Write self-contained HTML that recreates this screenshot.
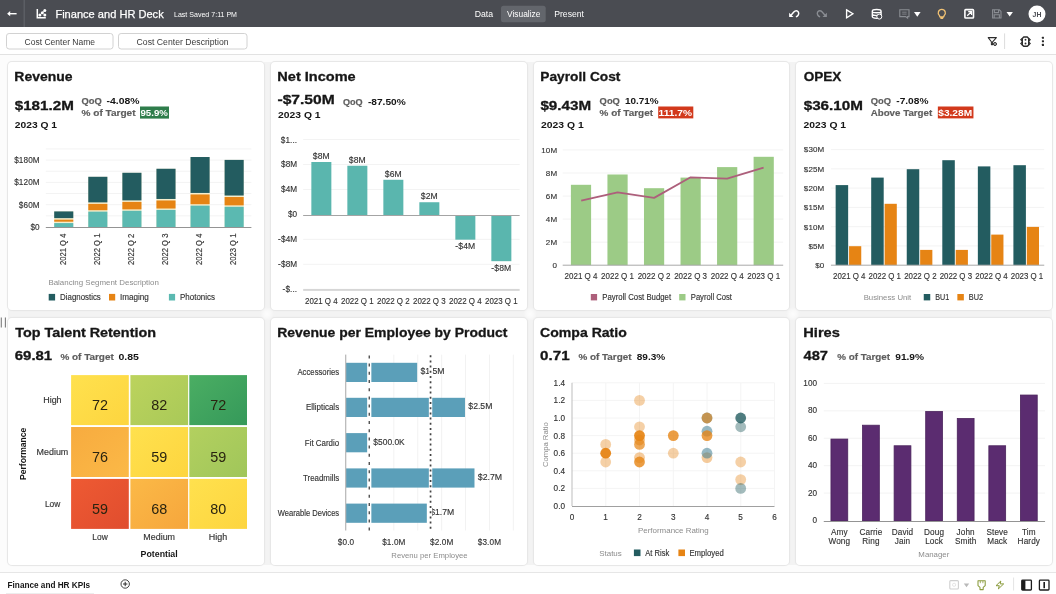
<!DOCTYPE html><html lang="en"><head><meta charset="utf-8"><title>Finance and HR Deck</title><style>

*{margin:0;padding:0;box-sizing:border-box}
html,body{width:1056px;height:594px;overflow:hidden;background:#fcfcfc;font-family:"Liberation Sans", sans-serif;}
svg{display:block;font-family:"Liberation Sans", sans-serif;will-change:transform;}
text{font-family:"Liberation Sans", sans-serif;}
.top{position:absolute;left:0;top:0;width:1056px;height:27px;background:#4a4c52;}
.fbar{position:absolute;left:0;top:27px;width:1056px;height:28px;background:#fff;border-bottom:1px solid #e2e2e2;}
.canvas{position:absolute;left:0;top:55px;width:1056px;height:517px;background:#fcfcfc;}
.card{position:absolute;background:#fff;border-radius:4px;overflow:hidden;box-shadow:0 0 0 1px #e7e7e7,0 0 3px rgba(0,0,0,.06);}
.gut{position:absolute;background:#f3f3f3}
.spot{position:absolute;width:14px;height:14px;background:radial-gradient(circle,rgba(255,255,255,.85) 0,rgba(255,255,255,.5) 35%,rgba(255,255,255,0) 70%)}
.foot{position:absolute;left:0;top:572px;width:1056px;height:22px;background:#fff;border-top:1px solid #e6e6e6;}
.foot svg{margin-top:-1px}
.grip{position:absolute;left:0;top:317px;width:8px;height:11px}

</style></head><body>
<header class="top"><svg width="1056" height="27" viewBox="0 0 1056 27"><line x1="24.20" y1="0.00" x2="24.20" y2="27.00" stroke="#5f6268" stroke-width="1.3" /><path d="M16.6 13.7H8.6" fill="none" stroke="#ffffff" stroke-width="1.4"/><path d="M7.1 13.7L10.2 11.1V16.3Z" fill="#ffffff"/><path d="M37.3 9.1V17.8H45.8" fill="none" stroke="#ffffff" stroke-width="1.5"/><path d="M39.9 15L44.8 10.5" fill="none" stroke="#ffffff" stroke-width=".7"/><circle cx="39.9" cy="15" r="1.5" fill="#ffffff"/><circle cx="42.35" cy="12.8" r="1.5" fill="#ffffff"/><circle cx="44.8" cy="10.5" r="1.5" fill="#ffffff"/><circle cx="44.8" cy="15" r="1.5" fill="#ffffff"/><text x="55.4" y="17.9" font-size="11.8" fill="#ffffff" textLength="108.3" lengthAdjust="spacingAndGlyphs" stroke="#fff" stroke-width=".25">Finance and HR Deck</text><text x="174.0" y="17.2" font-size="7.2" fill="#ffffff" textLength="63.0" lengthAdjust="spacingAndGlyphs">Last Saved 7:11 PM</text><text x="474.7" y="17.3" font-size="8.8" fill="#ffffff" textLength="18.4" lengthAdjust="spacingAndGlyphs">Data</text><rect x="501" y="5.7" width="44.7" height="16.5" rx="2.5" fill="#63666c"/><text x="507.0" y="17.3" font-size="8.8" fill="#ffffff" textLength="33.4" lengthAdjust="spacingAndGlyphs">Visualize</text><text x="554.2" y="17.3" font-size="8.8" fill="#ffffff" textLength="29.8" lengthAdjust="spacingAndGlyphs">Present</text><path d="M791 15.2L793.8 12C795.3 10.3 797.5 10.3 798.4 12.1C799.3 13.9 798.2 16.1 795.9 16.9" fill="none" stroke="#ffffff" stroke-width="1.45"/><path d="M789.1 12.8V17.1H793.5Z" fill="#ffffff"/><path d="M825 15.2L822.2 12C820.7 10.3 818.5 10.3 817.6 12.1C816.7 13.9 817.8 16.1 820.1 16.9" fill="none" stroke="#8a8d93" stroke-width="1.35"/><path d="M826.9 12.8V17.1H822.5Z" fill="#8a8d93"/><path d="M846.6 9.9L852.9 13.8L846.6 17.7Z" fill="none" stroke="#ffffff" stroke-width="1.35" stroke-linejoin="miter"/><path d="M872.3 11.2C872.3 8.9 881.1 8.9 881.1 11.2V16.6C881.1 17.6 879 18.3 876.7 18.3C874.4 18.3 872.3 17.6 872.3 16.6Z M872.3 11.2C872.3 13.3 881.1 13.3 881.1 11.2 M872.3 14C872.3 16 881.1 16 881.1 14" fill="none" stroke="#ffffff" stroke-width="1.35"/><circle cx="879.3" cy="16.6" r="2.5" fill="#4a4c52" stroke="#ffffff" stroke-width="1"/><path d="M899.8 9.7H909V16.6H907.6V18.2L905.6 16.6H899.8Z" fill="none" stroke="#8a8d93" stroke-width="1.1"/><path d="M902.2 12.2H906.6M902.2 14.1H906.6" stroke="#8a8d93" stroke-width=".8"/><path d="M914 12.1H920.6L917.3 16.7Z" fill="#ffffff"/><path d="M939.4 15.4C937.2 13.6 938.2 9.4 941.8 9.4C945.4 9.4 946.4 13.6 944.2 15.4L943.6 17H940Z M940.4 18.4H943.2" fill="none" stroke="#f1c274" stroke-width="1.3" stroke-linejoin="round"/><rect x="964.9" y="9.6" width="8.6" height="8.4" rx=".8" fill="none" stroke="#ffffff" stroke-width="1.6"/><path d="M967.2 15.8L971.4 11.8M968.2 11.6H971.6V15" fill="none" stroke="#ffffff" stroke-width="1.2"/><path d="M992.6 9.8H999.4L1001 11.4V18H992.6Z M994.4 9.8V12.6H998.6V9.8 M994.2 18V14.8H999.4V18" fill="none" stroke="#8a8d93" stroke-width="1.1"/><path d="M1006.5 12.1H1012.9L1009.7 16.6Z" fill="#ffffff"/><circle cx="1037" cy="13.9" r="8.5" fill="#ffffff"/><text x="1037.0" y="16.6" font-size="7.4" fill="#4a4c52" text-anchor="middle" font-weight="bold" textLength="8.8" lengthAdjust="spacingAndGlyphs">JH</text></svg></header>
<nav class="fbar"><svg width="1056" height="28" viewBox="0 27 1056 28"><rect x="6.5" y="33.5" width="106.5" height="15.5" rx="2.6" fill="#fff" stroke="#d2d2d2"/><text x="59.8" y="44.7" font-size="8.5" fill="#3a3a3a" text-anchor="middle" textLength="70.5" lengthAdjust="spacingAndGlyphs">Cost Center Name</text><rect x="118.5" y="33.5" width="128.5" height="15.5" rx="2.6" fill="#fff" stroke="#d2d2d2"/><text x="182.6" y="44.7" font-size="8.5" fill="#3a3a3a" text-anchor="middle" textLength="92.0" lengthAdjust="spacingAndGlyphs">Cost Center Description</text><path d="M988.2 37.6H996.4L992.6 41.8V44.6L991.4 44.6V41.8Z" fill="none" stroke="#2c2c2c" stroke-width="1.05" stroke-linejoin="round"/><circle cx="995" cy="44" r="1.5" fill="#bdbdbd" stroke="#2c2c2c" stroke-width="1"/><line x1="1004.60" y1="33.40" x2="1004.60" y2="49.00" stroke="#dcdcdc" stroke-width="1" /><path d="M1023.7 37H1027.3L1028.7 38.4V44.9L1027.3 46.3H1023.7L1022.3 44.9V38.4Z" fill="none" stroke="#2c2c2c" stroke-width="1.4" stroke-linejoin="round"/><path d="M1022.2 38.5L1020.8 39.8L1022.2 41.1M1022.2 42.2L1020.8 43.5L1022.2 44.8M1028.8 38.5L1030.2 39.8L1028.8 41.1M1028.8 42.2L1030.2 43.5L1028.8 44.8" fill="none" stroke="#2c2c2c" stroke-width="1.1"/><circle cx="1025.5" cy="39.8" r=".95" fill="#2c2c2c"/><circle cx="1025.5" cy="43.5" r=".95" fill="#2c2c2c"/><rect x="1041.9" y="36.65" width="2.1" height="2.1" rx=".5" fill="#2c2c2c"/><rect x="1041.9" y="40.25" width="2.1" height="2.1" rx=".5" fill="#2c2c2c"/><rect x="1041.9" y="43.85" width="2.1" height="2.1" rx=".5" fill="#2c2c2c"/></svg></nav>
<main class="canvas"></main>
<div class="gut" style="left:263.75px;top:62px;width:7.00px;height:503px"></div><div class="gut" style="left:526.50px;top:62px;width:7.00px;height:503px"></div><div class="gut" style="left:789.25px;top:62px;width:7.00px;height:503px"></div><div class="gut" style="left:8px;top:310px;width:1044px;height:8px"></div><div class="spot" style="left:260.25px;top:307px"></div><div class="spot" style="left:523.00px;top:307px"></div><div class="spot" style="left:785.75px;top:307px"></div>
<section class="card" style="left:8px;top:62px;width:255.75px;height:248px"><svg width="255.75" height="248" viewBox="8 62 255.75 248"><text x="14.3" y="81.4" font-size="13" fill="#161616" font-weight="bold" textLength="58.2" lengthAdjust="spacingAndGlyphs" stroke="#161616" stroke-width=".3">Revenue</text><text x="14.7" y="110.1" font-size="13" fill="#161616" font-weight="bold" textLength="59.2" lengthAdjust="spacingAndGlyphs" stroke="#161616" stroke-width=".3">$181.2M</text><text x="81.5" y="104.0" font-size="9.2" fill="#5e5e5e" font-weight="bold" textLength="20.3" lengthAdjust="spacingAndGlyphs" stroke="#5e5e5e" stroke-width=".18">QoQ</text><text x="106.5" y="104.0" font-size="9.2" fill="#161616" font-weight="bold" textLength="33.0" lengthAdjust="spacingAndGlyphs">-4.08%</text><text x="81.5" y="116.3" font-size="9.2" fill="#5e5e5e" font-weight="bold" textLength="54.0" lengthAdjust="spacingAndGlyphs" stroke="#5e5e5e" stroke-width=".18">% of Target</text><rect x="140.00" y="106.50" width="29.00" height="12.10" fill="#2f7d4b" /><text x="140.5" y="116.3" font-size="9.2" fill="#ffffff" font-weight="bold" textLength="27.4" lengthAdjust="spacingAndGlyphs">95.9%</text><text x="14.8" y="128.2" font-size="9.3" fill="#161616" font-weight="bold" textLength="42.2" lengthAdjust="spacingAndGlyphs">2023 Q 1</text><line x1="45.80" y1="215.85" x2="251.40" y2="215.85" stroke="#f3f3f3" stroke-width="1" /><line x1="45.80" y1="204.70" x2="251.40" y2="204.70" stroke="#f3f3f3" stroke-width="1" /><line x1="45.80" y1="193.55" x2="251.40" y2="193.55" stroke="#f3f3f3" stroke-width="1" /><line x1="45.80" y1="182.40" x2="251.40" y2="182.40" stroke="#f3f3f3" stroke-width="1" /><line x1="45.80" y1="171.25" x2="251.40" y2="171.25" stroke="#f3f3f3" stroke-width="1" /><line x1="45.80" y1="160.10" x2="251.40" y2="160.10" stroke="#f3f3f3" stroke-width="1" /><line x1="45.80" y1="148.95" x2="251.40" y2="148.95" stroke="#f3f3f3" stroke-width="1" /><text x="39.8" y="229.9" font-size="8.2" fill="#333333" text-anchor="end" letter-spacing=".12" stroke="#333333" stroke-width=".14">$0</text><text x="39.8" y="207.6" font-size="8.2" fill="#333333" text-anchor="end" letter-spacing=".12" stroke="#333333" stroke-width=".14">$60M</text><text x="39.8" y="185.3" font-size="8.2" fill="#333333" text-anchor="end" letter-spacing=".12" stroke="#333333" stroke-width=".14">$120M</text><text x="39.8" y="163.0" font-size="8.2" fill="#333333" text-anchor="end" letter-spacing=".12" stroke="#333333" stroke-width=".14">$180M</text><rect x="54.20" y="211.42" width="19.10" height="15.58" fill="#f5eecd" /><rect x="54.20" y="211.42" width="19.10" height="6.73" fill="#235c60" /><rect x="54.20" y="219.65" width="19.10" height="2.04" fill="#e68414" /><rect x="54.20" y="223.08" width="19.10" height="3.92" fill="#5bb9b1" /><text x="65.8" y="233.6" font-size="8.4" fill="#333333" text-anchor="end" textLength="31.5" lengthAdjust="spacingAndGlyphs" stroke="#333333" stroke-width=".14" transform="rotate(-90 65.8 233.6)">2021 Q 4</text><rect x="88.28" y="176.78" width="19.10" height="50.22" fill="#f5eecd" /><rect x="88.28" y="176.78" width="19.10" height="25.62" fill="#235c60" /><rect x="88.28" y="203.90" width="19.10" height="6.33" fill="#e68414" /><rect x="88.28" y="211.63" width="19.10" height="15.37" fill="#5bb9b1" /><text x="99.8" y="233.6" font-size="8.4" fill="#333333" text-anchor="end" textLength="31.5" lengthAdjust="spacingAndGlyphs" stroke="#333333" stroke-width=".14" transform="rotate(-90 99.8 233.6)">2022 Q 1</text><rect x="122.36" y="172.77" width="19.10" height="54.23" fill="#f5eecd" /><rect x="122.36" y="172.77" width="19.10" height="27.63" fill="#235c60" /><rect x="122.36" y="201.90" width="19.10" height="7.47" fill="#e68414" /><rect x="122.36" y="210.77" width="19.10" height="16.23" fill="#5bb9b1" /><text x="133.9" y="233.6" font-size="8.4" fill="#333333" text-anchor="end" textLength="31.5" lengthAdjust="spacingAndGlyphs" stroke="#333333" stroke-width=".14" transform="rotate(-90 133.9 233.6)">2022 Q 2</text><rect x="156.44" y="168.76" width="19.10" height="58.24" fill="#f5eecd" /><rect x="156.44" y="168.76" width="19.10" height="30.21" fill="#235c60" /><rect x="156.44" y="200.47" width="19.10" height="8.05" fill="#e68414" /><rect x="156.44" y="209.91" width="19.10" height="17.09" fill="#5bb9b1" /><text x="168.0" y="233.6" font-size="8.4" fill="#333333" text-anchor="end" textLength="31.5" lengthAdjust="spacingAndGlyphs" stroke="#333333" stroke-width=".14" transform="rotate(-90 168.0 233.6)">2022 Q 3</text><rect x="190.52" y="157.02" width="19.10" height="69.98" fill="#f5eecd" /><rect x="190.52" y="157.02" width="19.10" height="35.93" fill="#235c60" /><rect x="190.52" y="194.46" width="19.10" height="9.77" fill="#e68414" /><rect x="190.52" y="205.62" width="19.10" height="21.38" fill="#5bb9b1" /><text x="202.1" y="233.6" font-size="8.4" fill="#333333" text-anchor="end" textLength="31.5" lengthAdjust="spacingAndGlyphs" stroke="#333333" stroke-width=".14" transform="rotate(-90 202.1 233.6)">2022 Q 4</text><rect x="224.60" y="159.89" width="19.10" height="67.11" fill="#f5eecd" /><rect x="224.60" y="159.89" width="19.10" height="35.64" fill="#235c60" /><rect x="224.60" y="197.03" width="19.10" height="8.33" fill="#e68414" /><rect x="224.60" y="206.77" width="19.10" height="20.23" fill="#5bb9b1" /><text x="236.1" y="233.6" font-size="8.4" fill="#333333" text-anchor="end" textLength="31.5" lengthAdjust="spacingAndGlyphs" stroke="#333333" stroke-width=".14" transform="rotate(-90 236.1 233.6)">2023 Q 1</text><line x1="45.80" y1="227.50" x2="251.40" y2="227.50" stroke="#949494" stroke-width="1" /><text x="48.4" y="284.6" font-size="8" fill="#8c8c8c" textLength="110.5" lengthAdjust="spacingAndGlyphs">Balancing Segment Description</text><rect x="48.70" y="293.90" width="6.40" height="6.60" fill="#235c60" /><text x="60.1" y="300.1" font-size="8.2" fill="#333333" textLength="40.7" lengthAdjust="spacingAndGlyphs" stroke="#333333" stroke-width=".14">Diagnostics</text><rect x="109.00" y="293.90" width="6.20" height="6.60" fill="#e68414" /><text x="120.0" y="300.1" font-size="8.2" fill="#333333" textLength="28.9" lengthAdjust="spacingAndGlyphs" stroke="#333333" stroke-width=".14">Imaging</text><rect x="168.90" y="293.90" width="6.20" height="6.60" fill="#5bb9b1" /><text x="180.0" y="300.1" font-size="8.2" fill="#333333" textLength="35.0" lengthAdjust="spacingAndGlyphs" stroke="#333333" stroke-width=".14">Photonics</text></svg></section>
<section class="card" style="left:270.75px;top:62px;width:255.75px;height:248px"><svg width="255.75" height="248" viewBox="270.75 62 255.75 248"><text x="277.1" y="81.4" font-size="13" fill="#161616" font-weight="bold" textLength="78.3" lengthAdjust="spacingAndGlyphs" stroke="#161616" stroke-width=".3">Net Income</text><text x="277.2" y="104.4" font-size="13" fill="#161616" font-weight="bold" textLength="57.2" lengthAdjust="spacingAndGlyphs" stroke="#161616" stroke-width=".3">-$7.50M</text><text x="342.7" y="104.8" font-size="9.2" fill="#5e5e5e" font-weight="bold" textLength="19.7" lengthAdjust="spacingAndGlyphs" stroke="#5e5e5e" stroke-width=".18">QoQ</text><text x="367.7" y="104.8" font-size="9.2" fill="#161616" font-weight="bold" textLength="37.8" lengthAdjust="spacingAndGlyphs">-87.50%</text><text x="277.8" y="117.9" font-size="9.3" fill="#161616" font-weight="bold" textLength="42.5" lengthAdjust="spacingAndGlyphs">2023 Q 1</text><line x1="302.90" y1="289.25" x2="519.40" y2="289.25" stroke="#f3f3f3" stroke-width="1" /><line x1="302.90" y1="264.30" x2="519.40" y2="264.30" stroke="#f3f3f3" stroke-width="1" /><line x1="302.90" y1="239.35" x2="519.40" y2="239.35" stroke="#f3f3f3" stroke-width="1" /><line x1="302.90" y1="189.45" x2="519.40" y2="189.45" stroke="#f3f3f3" stroke-width="1" /><line x1="302.90" y1="164.50" x2="519.40" y2="164.50" stroke="#f3f3f3" stroke-width="1" /><line x1="302.90" y1="139.55" x2="519.40" y2="139.55" stroke="#f3f3f3" stroke-width="1" /><text x="297.0" y="142.5" font-size="8.2" fill="#333333" text-anchor="end" letter-spacing=".12" stroke="#333333" stroke-width=".14">$1...</text><text x="297.0" y="167.4" font-size="8.2" fill="#333333" text-anchor="end" letter-spacing=".12" stroke="#333333" stroke-width=".14">$8M</text><text x="297.0" y="192.4" font-size="8.2" fill="#333333" text-anchor="end" letter-spacing=".12" stroke="#333333" stroke-width=".14">$4M</text><text x="297.0" y="217.3" font-size="8.2" fill="#333333" text-anchor="end" letter-spacing=".12" stroke="#333333" stroke-width=".14">$0</text><text x="297.0" y="242.3" font-size="8.2" fill="#333333" text-anchor="end" letter-spacing=".12" stroke="#333333" stroke-width=".14">-$4M</text><text x="297.0" y="267.2" font-size="8.2" fill="#333333" text-anchor="end" letter-spacing=".12" stroke="#333333" stroke-width=".14">-$8M</text><text x="297.0" y="292.2" font-size="8.2" fill="#333333" text-anchor="end" letter-spacing=".12" stroke="#333333" stroke-width=".14">-$...</text><rect x="311.10" y="162.00" width="20.00" height="53.09" fill="#5ab6ae" /><text x="321.1" y="158.8" font-size="8.6" fill="#333333" text-anchor="middle" letter-spacing=".12" stroke="#333333" stroke-width=".14">$8M</text><text x="321.1" y="303.6" font-size="8.3" fill="#333333" text-anchor="middle" textLength="32.6" lengthAdjust="spacingAndGlyphs" stroke="#333333" stroke-width=".14">2021 Q 4</text><rect x="347.10" y="165.75" width="20.00" height="49.35" fill="#5ab6ae" /><text x="357.1" y="162.5" font-size="8.6" fill="#333333" text-anchor="middle" letter-spacing=".12" stroke="#333333" stroke-width=".14">$8M</text><text x="357.1" y="303.6" font-size="8.3" fill="#333333" text-anchor="middle" textLength="32.6" lengthAdjust="spacingAndGlyphs" stroke="#333333" stroke-width=".14">2022 Q 1</text><rect x="383.10" y="179.78" width="20.00" height="35.32" fill="#5ab6ae" /><text x="393.1" y="176.5" font-size="8.6" fill="#333333" text-anchor="middle" letter-spacing=".12" stroke="#333333" stroke-width=".14">$6M</text><text x="393.1" y="303.6" font-size="8.3" fill="#333333" text-anchor="middle" textLength="32.6" lengthAdjust="spacingAndGlyphs" stroke="#333333" stroke-width=".14">2022 Q 2</text><rect x="419.10" y="202.24" width="20.00" height="12.86" fill="#5ab6ae" /><text x="429.1" y="199.0" font-size="8.6" fill="#333333" text-anchor="middle" letter-spacing=".12" stroke="#333333" stroke-width=".14">$2M</text><text x="429.1" y="303.6" font-size="8.3" fill="#333333" text-anchor="middle" textLength="32.6" lengthAdjust="spacingAndGlyphs" stroke="#333333" stroke-width=".14">2022 Q 3</text><rect x="455.10" y="215.10" width="20.00" height="24.56" fill="#5ab6ae" /><text x="465.1" y="249.1" font-size="8.6" fill="#333333" text-anchor="middle" letter-spacing=".12" stroke="#333333" stroke-width=".14">-$4M</text><text x="465.1" y="303.6" font-size="8.3" fill="#333333" text-anchor="middle" textLength="32.6" lengthAdjust="spacingAndGlyphs" stroke="#333333" stroke-width=".14">2022 Q 4</text><rect x="491.10" y="215.10" width="20.00" height="46.08" fill="#5ab6ae" /><text x="501.1" y="270.6" font-size="8.6" fill="#333333" text-anchor="middle" letter-spacing=".12" stroke="#333333" stroke-width=".14">-$8M</text><text x="501.1" y="303.6" font-size="8.3" fill="#333333" text-anchor="middle" textLength="32.6" lengthAdjust="spacingAndGlyphs" stroke="#333333" stroke-width=".14">2023 Q 1</text><line x1="302.90" y1="215.50" x2="519.40" y2="215.50" stroke="#a4a4a4" stroke-width="1" /><line x1="302.90" y1="290.00" x2="519.40" y2="290.00" stroke="#b8b8b8" stroke-width="1.2" /></svg></section>
<section class="card" style="left:533.5px;top:62px;width:255.75px;height:248px"><svg width="255.75" height="248" viewBox="533.5 62 255.75 248"><text x="539.8" y="81.4" font-size="13" fill="#161616" font-weight="bold" textLength="80.1" lengthAdjust="spacingAndGlyphs" stroke="#161616" stroke-width=".3">Payroll Cost</text><text x="539.9" y="110.1" font-size="13" fill="#161616" font-weight="bold" textLength="50.7" lengthAdjust="spacingAndGlyphs" stroke="#161616" stroke-width=".3">$9.43M</text><text x="599.1" y="104.0" font-size="9.2" fill="#5e5e5e" font-weight="bold" textLength="20.3" lengthAdjust="spacingAndGlyphs" stroke="#5e5e5e" stroke-width=".18">QoQ</text><text x="624.5" y="104.0" font-size="9.2" fill="#161616" font-weight="bold" textLength="33.7" lengthAdjust="spacingAndGlyphs">10.71%</text><text x="599.1" y="116.3" font-size="9.2" fill="#5e5e5e" font-weight="bold" textLength="53.4" lengthAdjust="spacingAndGlyphs" stroke="#5e5e5e" stroke-width=".18">% of Target</text><rect x="657.70" y="106.50" width="35.10" height="11.90" fill="#d2391c" /><text x="658.1" y="116.3" font-size="9.2" fill="#ffffff" font-weight="bold" textLength="33.4" lengthAdjust="spacingAndGlyphs">111.7%</text><text x="540.6" y="128.2" font-size="9.3" fill="#161616" font-weight="bold" textLength="42.6" lengthAdjust="spacingAndGlyphs">2023 Q 1</text><line x1="562.20" y1="242.15" x2="782.70" y2="242.15" stroke="#f3f3f3" stroke-width="1" /><line x1="562.20" y1="219.10" x2="782.70" y2="219.10" stroke="#f3f3f3" stroke-width="1" /><line x1="562.20" y1="196.05" x2="782.70" y2="196.05" stroke="#f3f3f3" stroke-width="1" /><line x1="562.20" y1="173.00" x2="782.70" y2="173.00" stroke="#f3f3f3" stroke-width="1" /><line x1="562.20" y1="149.95" x2="782.70" y2="149.95" stroke="#f3f3f3" stroke-width="1" /><text x="556.7" y="268.0" font-size="8.0" fill="#333333" text-anchor="end" letter-spacing=".12" stroke="#333333" stroke-width=".14">0</text><text x="556.7" y="245.0" font-size="8.0" fill="#333333" text-anchor="end" letter-spacing=".12" stroke="#333333" stroke-width=".14">2M</text><text x="556.7" y="221.9" font-size="8.0" fill="#333333" text-anchor="end" letter-spacing=".12" stroke="#333333" stroke-width=".14">4M</text><text x="556.7" y="198.9" font-size="8.0" fill="#333333" text-anchor="end" letter-spacing=".12" stroke="#333333" stroke-width=".14">6M</text><text x="556.7" y="175.8" font-size="8.0" fill="#333333" text-anchor="end" letter-spacing=".12" stroke="#333333" stroke-width=".14">8M</text><text x="556.7" y="152.8" font-size="8.0" fill="#333333" text-anchor="end" letter-spacing=".12" stroke="#333333" stroke-width=".14">10M</text><rect x="570.40" y="184.80" width="20.20" height="80.40" fill="#9ccb86" /><text x="580.5" y="278.6" font-size="8.3" fill="#333333" text-anchor="middle" textLength="32.8" lengthAdjust="spacingAndGlyphs" stroke="#333333" stroke-width=".14">2021 Q 4</text><rect x="606.94" y="174.50" width="20.20" height="90.70" fill="#9ccb86" /><text x="617.0" y="278.6" font-size="8.3" fill="#333333" text-anchor="middle" textLength="32.8" lengthAdjust="spacingAndGlyphs" stroke="#333333" stroke-width=".14">2022 Q 1</text><rect x="643.48" y="188.20" width="20.20" height="77.00" fill="#9ccb86" /><text x="653.6" y="278.6" font-size="8.3" fill="#333333" text-anchor="middle" textLength="32.8" lengthAdjust="spacingAndGlyphs" stroke="#333333" stroke-width=".14">2022 Q 2</text><rect x="680.02" y="177.60" width="20.20" height="87.60" fill="#9ccb86" /><text x="690.1" y="278.6" font-size="8.3" fill="#333333" text-anchor="middle" textLength="32.8" lengthAdjust="spacingAndGlyphs" stroke="#333333" stroke-width=".14">2022 Q 3</text><rect x="716.56" y="167.10" width="20.20" height="98.10" fill="#9ccb86" /><text x="726.7" y="278.6" font-size="8.3" fill="#333333" text-anchor="middle" textLength="32.8" lengthAdjust="spacingAndGlyphs" stroke="#333333" stroke-width=".14">2022 Q 4</text><rect x="753.10" y="156.80" width="20.20" height="108.40" fill="#9ccb86" /><text x="763.2" y="278.6" font-size="8.3" fill="#333333" text-anchor="middle" textLength="32.8" lengthAdjust="spacingAndGlyphs" stroke="#333333" stroke-width=".14">2023 Q 1</text><line x1="562.20" y1="265.20" x2="782.70" y2="265.20" stroke="#a8a8a8" stroke-width="1" /><polyline fill="none" stroke="#ad5f7b" stroke-width="1.8" stroke-linejoin="round" points="580.7,200.7 617.1,192.3 653.6,197.9 690.1,177.3 726.6,178.6 763.1,167.7"/><rect x="590.30" y="294.00" width="6.30" height="6.40" fill="#ad5f7b" /><text x="601.8" y="300.1" font-size="8.2" fill="#333333" textLength="68.8" lengthAdjust="spacingAndGlyphs" stroke="#333333" stroke-width=".14">Payroll Cost Budget</text><rect x="678.70" y="294.00" width="6.30" height="6.40" fill="#9ccb86" /><text x="690.3" y="300.1" font-size="8.2" fill="#333333" textLength="41.1" lengthAdjust="spacingAndGlyphs" stroke="#333333" stroke-width=".14">Payroll Cost</text></svg></section>
<section class="card" style="left:796.25px;top:62px;width:255.75px;height:248px"><svg width="255.75" height="248" viewBox="796.25 62 255.75 248"><text x="803.9" y="81.4" font-size="13" fill="#161616" font-weight="bold" textLength="37.7" lengthAdjust="spacingAndGlyphs" stroke="#161616" stroke-width=".3">OPEX</text><text x="803.9" y="110.1" font-size="13" fill="#161616" font-weight="bold" textLength="59.4" lengthAdjust="spacingAndGlyphs" stroke="#161616" stroke-width=".3">$36.10M</text><text x="870.9" y="104.0" font-size="9.2" fill="#5e5e5e" font-weight="bold" textLength="20.3" lengthAdjust="spacingAndGlyphs" stroke="#5e5e5e" stroke-width=".18">QoQ</text><text x="896.5" y="104.0" font-size="9.2" fill="#161616" font-weight="bold" textLength="32.2" lengthAdjust="spacingAndGlyphs">-7.08%</text><text x="870.9" y="116.3" font-size="9.2" fill="#5e5e5e" font-weight="bold" textLength="61.6" lengthAdjust="spacingAndGlyphs" stroke="#5e5e5e" stroke-width=".18">Above Target</text><rect x="938.10" y="106.50" width="35.60" height="11.90" fill="#d2391c" /><text x="938.5" y="116.3" font-size="9.2" fill="#ffffff" font-weight="bold" textLength="33.9" lengthAdjust="spacingAndGlyphs">$3.28M</text><text x="803.8" y="128.2" font-size="9.3" fill="#161616" font-weight="bold" textLength="42.5" lengthAdjust="spacingAndGlyphs">2023 Q 1</text><line x1="831.20" y1="245.93" x2="1044.50" y2="245.93" stroke="#f3f3f3" stroke-width="1" /><line x1="831.20" y1="226.66" x2="1044.50" y2="226.66" stroke="#f3f3f3" stroke-width="1" /><line x1="831.20" y1="207.39" x2="1044.50" y2="207.39" stroke="#f3f3f3" stroke-width="1" /><line x1="831.20" y1="188.12" x2="1044.50" y2="188.12" stroke="#f3f3f3" stroke-width="1" /><line x1="831.20" y1="168.85" x2="1044.50" y2="168.85" stroke="#f3f3f3" stroke-width="1" /><line x1="831.20" y1="149.58" x2="1044.50" y2="149.58" stroke="#f3f3f3" stroke-width="1" /><text x="824.6" y="268.0" font-size="8.0" fill="#333333" text-anchor="end" letter-spacing=".12" stroke="#333333" stroke-width=".14">$0</text><text x="824.6" y="248.8" font-size="8.0" fill="#333333" text-anchor="end" letter-spacing=".12" stroke="#333333" stroke-width=".14">$5M</text><text x="824.6" y="229.5" font-size="8.0" fill="#333333" text-anchor="end" letter-spacing=".12" stroke="#333333" stroke-width=".14">$10M</text><text x="824.6" y="210.2" font-size="8.0" fill="#333333" text-anchor="end" letter-spacing=".12" stroke="#333333" stroke-width=".14">$15M</text><text x="824.6" y="191.0" font-size="8.0" fill="#333333" text-anchor="end" letter-spacing=".12" stroke="#333333" stroke-width=".14">$20M</text><text x="824.6" y="171.7" font-size="8.0" fill="#333333" text-anchor="end" letter-spacing=".12" stroke="#333333" stroke-width=".14">$25M</text><text x="824.6" y="152.4" font-size="8.0" fill="#333333" text-anchor="end" letter-spacing=".12" stroke="#333333" stroke-width=".14">$30M</text><rect x="835.90" y="185.10" width="12.50" height="80.10" fill="#235c60" /><rect x="849.30" y="246.20" width="12.20" height="19.00" fill="#e68414" /><text x="849.5" y="278.6" font-size="8.3" fill="#333333" text-anchor="middle" textLength="32.4" lengthAdjust="spacingAndGlyphs" stroke="#333333" stroke-width=".14">2021 Q 4</text><rect x="871.45" y="177.60" width="12.50" height="87.60" fill="#235c60" /><rect x="884.85" y="203.80" width="12.20" height="61.40" fill="#e68414" /><text x="885.0" y="278.6" font-size="8.3" fill="#333333" text-anchor="middle" textLength="32.4" lengthAdjust="spacingAndGlyphs" stroke="#333333" stroke-width=".14">2022 Q 1</text><rect x="907.00" y="169.20" width="12.50" height="96.00" fill="#235c60" /><rect x="920.40" y="249.90" width="12.20" height="15.30" fill="#e68414" /><text x="920.6" y="278.6" font-size="8.3" fill="#333333" text-anchor="middle" textLength="32.4" lengthAdjust="spacingAndGlyphs" stroke="#333333" stroke-width=".14">2022 Q 2</text><rect x="942.55" y="160.20" width="12.50" height="105.00" fill="#235c60" /><rect x="955.95" y="249.90" width="12.20" height="15.30" fill="#e68414" /><text x="956.1" y="278.6" font-size="8.3" fill="#333333" text-anchor="middle" textLength="32.4" lengthAdjust="spacingAndGlyphs" stroke="#333333" stroke-width=".14">2022 Q 3</text><rect x="978.10" y="166.40" width="12.50" height="98.80" fill="#235c60" /><rect x="991.50" y="234.60" width="12.20" height="30.60" fill="#e68414" /><text x="991.7" y="278.6" font-size="8.3" fill="#333333" text-anchor="middle" textLength="32.4" lengthAdjust="spacingAndGlyphs" stroke="#333333" stroke-width=".14">2022 Q 4</text><rect x="1013.65" y="165.20" width="12.50" height="100.00" fill="#235c60" /><rect x="1027.05" y="226.90" width="12.20" height="38.30" fill="#e68414" /><text x="1027.2" y="278.6" font-size="8.3" fill="#333333" text-anchor="middle" textLength="32.4" lengthAdjust="spacingAndGlyphs" stroke="#333333" stroke-width=".14">2023 Q 1</text><line x1="831.20" y1="265.20" x2="1044.50" y2="265.20" stroke="#a8a8a8" stroke-width="1" /><text x="863.9" y="300.1" font-size="8" fill="#8c8c8c" textLength="47.6" lengthAdjust="spacingAndGlyphs">Business Unit</text><rect x="924.00" y="294.00" width="6.50" height="6.40" fill="#235c60" /><text x="935.5" y="300.1" font-size="8.2" fill="#333333" textLength="14.0" lengthAdjust="spacingAndGlyphs" stroke="#333333" stroke-width=".14">BU1</text><rect x="957.60" y="294.00" width="6.50" height="6.40" fill="#e68414" /><text x="969.1" y="300.1" font-size="8.2" fill="#333333" textLength="14.3" lengthAdjust="spacingAndGlyphs" stroke="#333333" stroke-width=".14">BU2</text></svg></section>
<section class="card" style="left:8px;top:318px;width:255.75px;height:247px"><svg width="255.75" height="247" viewBox="8 318 255.75 247"><defs><linearGradient id="hy" x1="0" y1="0" x2="1" y2="1"><stop offset="0" stop-color="#ffe14e"/><stop offset="1" stop-color="#fdd53f"/></linearGradient><linearGradient id="hyg" x1="0" y1="0" x2="1" y2="1"><stop offset="0" stop-color="#bcd35d"/><stop offset="1" stop-color="#a9c958"/></linearGradient><linearGradient id="hg" x1="0" y1="0" x2="1" y2="1"><stop offset="0" stop-color="#4bae63"/><stop offset="1" stop-color="#35995a"/></linearGradient><linearGradient id="ho" x1="0" y1="0" x2="1" y2="1"><stop offset="0" stop-color="#f7ab3f"/><stop offset="1" stop-color="#fbb947"/></linearGradient><linearGradient id="ho2" x1="0" y1="0" x2="1" y2="1"><stop offset="0" stop-color="#fbb947"/><stop offset="1" stop-color="#f6a63c"/></linearGradient><linearGradient id="hlg" x1="0" y1="0" x2="1" y2="1"><stop offset="0" stop-color="#b3d05f"/><stop offset="1" stop-color="#a0c65a"/></linearGradient><linearGradient id="hr" x1="0" y1="0" x2="1" y2="1"><stop offset="0" stop-color="#ee5a33"/><stop offset="1" stop-color="#e04d2e"/></linearGradient></defs><text x="15.2" y="336.9" font-size="13" fill="#161616" font-weight="bold" textLength="140.8" lengthAdjust="spacingAndGlyphs" stroke="#161616" stroke-width=".3">Top Talent Retention</text><text x="14.8" y="359.8" font-size="13" fill="#161616" font-weight="bold" textLength="37.4" lengthAdjust="spacingAndGlyphs" stroke="#161616" stroke-width=".3">69.81</text><text x="60.4" y="360.2" font-size="9.2" fill="#5e5e5e" font-weight="bold" textLength="53.4" lengthAdjust="spacingAndGlyphs" stroke="#5e5e5e" stroke-width=".18">% of Target</text><text x="118.4" y="360.2" font-size="9.2" fill="#161616" font-weight="bold" textLength="20.5" lengthAdjust="spacingAndGlyphs">0.85</text><rect x="71.10" y="375.10" width="57.70" height="50.00" fill="url(#hy)" /><text x="99.9" y="410.0" font-size="15" fill="#2a2410" text-anchor="middle" textLength="16.0" lengthAdjust="spacingAndGlyphs">72</text><rect x="130.40" y="375.10" width="57.70" height="50.00" fill="url(#hyg)" /><text x="159.2" y="410.0" font-size="15" fill="#2a2410" text-anchor="middle" textLength="16.0" lengthAdjust="spacingAndGlyphs">82</text><rect x="189.30" y="375.10" width="57.70" height="50.00" fill="url(#hg)" /><text x="218.2" y="410.0" font-size="15" fill="#2a2410" text-anchor="middle" textLength="16.0" lengthAdjust="spacingAndGlyphs">72</text><rect x="71.10" y="427.00" width="57.70" height="50.00" fill="url(#ho)" /><text x="99.9" y="461.9" font-size="15" fill="#2a2410" text-anchor="middle" textLength="16.0" lengthAdjust="spacingAndGlyphs">76</text><rect x="130.40" y="427.00" width="57.70" height="50.00" fill="url(#hy)" /><text x="159.2" y="461.9" font-size="15" fill="#2a2410" text-anchor="middle" textLength="16.0" lengthAdjust="spacingAndGlyphs">59</text><rect x="189.30" y="427.00" width="57.70" height="50.00" fill="url(#hlg)" /><text x="218.2" y="461.9" font-size="15" fill="#2a2410" text-anchor="middle" textLength="16.0" lengthAdjust="spacingAndGlyphs">59</text><rect x="71.10" y="478.90" width="57.70" height="50.00" fill="url(#hr)" /><text x="99.9" y="513.8" font-size="15" fill="#2a2410" text-anchor="middle" textLength="16.0" lengthAdjust="spacingAndGlyphs">59</text><rect x="130.40" y="478.90" width="57.70" height="50.00" fill="url(#ho2)" /><text x="159.2" y="513.8" font-size="15" fill="#2a2410" text-anchor="middle" textLength="16.0" lengthAdjust="spacingAndGlyphs">68</text><rect x="189.30" y="478.90" width="57.70" height="50.00" fill="url(#hy)" /><text x="218.2" y="513.8" font-size="15" fill="#2a2410" text-anchor="middle" textLength="16.0" lengthAdjust="spacingAndGlyphs">80</text><text x="61.6" y="403.0" font-size="8.2" fill="#333333" text-anchor="end" textLength="18.4" lengthAdjust="spacingAndGlyphs" stroke="#333333" stroke-width=".14">High</text><text x="68.3" y="454.9" font-size="8.2" fill="#333333" text-anchor="end" textLength="31.7" lengthAdjust="spacingAndGlyphs" stroke="#333333" stroke-width=".14">Medium</text><text x="60.3" y="506.8" font-size="8.2" fill="#333333" text-anchor="end" textLength="15.4" lengthAdjust="spacingAndGlyphs" stroke="#333333" stroke-width=".14">Low</text><text x="100.0" y="539.7" font-size="8.2" fill="#333333" text-anchor="middle" textLength="15.4" lengthAdjust="spacingAndGlyphs" stroke="#333333" stroke-width=".14">Low</text><text x="159.2" y="539.7" font-size="8.2" fill="#333333" text-anchor="middle" textLength="31.7" lengthAdjust="spacingAndGlyphs" stroke="#333333" stroke-width=".14">Medium</text><text x="218.0" y="539.7" font-size="8.2" fill="#333333" text-anchor="middle" textLength="18.4" lengthAdjust="spacingAndGlyphs" stroke="#333333" stroke-width=".14">High</text><text x="140.6" y="556.6" font-size="8.6" fill="#161616" font-weight="bold" textLength="37.1" lengthAdjust="spacingAndGlyphs">Potential</text><text x="26.0" y="453.8" font-size="8.6" fill="#161616" text-anchor="middle" font-weight="bold" textLength="52.3" lengthAdjust="spacingAndGlyphs" transform="rotate(-90 26.0 453.8)">Performance</text></svg></section>
<section class="card" style="left:270.75px;top:318px;width:255.75px;height:247px"><svg width="255.75" height="247" viewBox="270.75 318 255.75 247"><text x="277.0" y="336.9" font-size="13" fill="#161616" font-weight="bold" textLength="230.1" lengthAdjust="spacingAndGlyphs" stroke="#161616" stroke-width=".3">Revenue per Employee by Product</text><line x1="369.70" y1="354.60" x2="369.70" y2="530.50" stroke="#f2f2f2" stroke-width="1" /><line x1="393.60" y1="354.60" x2="393.60" y2="530.50" stroke="#f2f2f2" stroke-width="1" /><line x1="417.50" y1="354.60" x2="417.50" y2="530.50" stroke="#f2f2f2" stroke-width="1" /><line x1="441.40" y1="354.60" x2="441.40" y2="530.50" stroke="#f2f2f2" stroke-width="1" /><line x1="465.30" y1="354.60" x2="465.30" y2="530.50" stroke="#f2f2f2" stroke-width="1" /><line x1="489.20" y1="354.60" x2="489.20" y2="530.50" stroke="#f2f2f2" stroke-width="1" /><line x1="513.10" y1="354.60" x2="513.10" y2="530.50" stroke="#f2f2f2" stroke-width="1" /><rect x="345.80" y="362.80" width="71.13" height="19.20" fill="#5b9fb9" /><text x="338.9" y="375.4" font-size="8.2" fill="#333333" text-anchor="end" textLength="41.7" lengthAdjust="spacingAndGlyphs" stroke="#333333" stroke-width=".14">Accessories</text><text x="420.3" y="374.4" font-size="8.7" fill="#333333" textLength="24.0" lengthAdjust="spacingAndGlyphs" stroke="#333333" stroke-width=".14">$1.5M</text><rect x="345.80" y="397.80" width="118.93" height="19.20" fill="#5b9fb9" /><text x="338.9" y="410.4" font-size="8.2" fill="#333333" text-anchor="end" textLength="33.2" lengthAdjust="spacingAndGlyphs" stroke="#333333" stroke-width=".14">Ellipticals</text><text x="468.1" y="409.4" font-size="8.7" fill="#333333" textLength="24.0" lengthAdjust="spacingAndGlyphs" stroke="#333333" stroke-width=".14">$2.5M</text><rect x="345.80" y="433.10" width="23.90" height="19.20" fill="#5b9fb9" /><text x="338.9" y="445.7" font-size="8.2" fill="#333333" text-anchor="end" textLength="34.3" lengthAdjust="spacingAndGlyphs" stroke="#333333" stroke-width=".14">Fit Cardio</text><text x="373.1" y="444.7" font-size="8.7" fill="#333333" textLength="31.4" lengthAdjust="spacingAndGlyphs" stroke="#333333" stroke-width=".14">$500.0K</text><rect x="345.80" y="468.40" width="128.44" height="19.20" fill="#5b9fb9" /><text x="338.9" y="481.0" font-size="8.2" fill="#333333" text-anchor="end" textLength="36.1" lengthAdjust="spacingAndGlyphs" stroke="#333333" stroke-width=".14">Treadmills</text><text x="477.6" y="480.0" font-size="8.7" fill="#333333" textLength="24.3" lengthAdjust="spacingAndGlyphs" stroke="#333333" stroke-width=".14">$2.7M</text><rect x="345.80" y="503.60" width="80.78" height="19.20" fill="#5b9fb9" /><text x="338.9" y="516.2" font-size="8.2" fill="#333333" text-anchor="end" textLength="61.3" lengthAdjust="spacingAndGlyphs" stroke="#333333" stroke-width=".14">Wearable Devices</text><text x="430.0" y="515.2" font-size="8.7" fill="#333333" textLength="24.0" lengthAdjust="spacingAndGlyphs" stroke="#333333" stroke-width=".14">$1.7M</text><line x1="345.50" y1="354.60" x2="345.50" y2="530.50" stroke="#a6a6a6" stroke-width="1" /><line x1="369.00" y1="354.60" x2="369.00" y2="530.50" stroke="#ffffff" stroke-width="4.2" /><line x1="369.00" y1="355.40" x2="369.00" y2="530.50" stroke="#444444" stroke-width="1.3" stroke-dasharray="3 5.2"/><line x1="430.30" y1="354.60" x2="430.30" y2="530.50" stroke="#ffffff" stroke-width="3.4" /><line x1="430.30" y1="355.20" x2="430.30" y2="530.50" stroke="#444444" stroke-width="1.7" stroke-dasharray="2 3.2"/><text x="345.8" y="544.6" font-size="8.2" fill="#333333" text-anchor="middle" letter-spacing=".12" stroke="#333333" stroke-width=".14">$0.0</text><text x="393.6" y="544.6" font-size="8.2" fill="#333333" text-anchor="middle" letter-spacing=".12" stroke="#333333" stroke-width=".14">$1.0M</text><text x="441.4" y="544.6" font-size="8.2" fill="#333333" text-anchor="middle" letter-spacing=".12" stroke="#333333" stroke-width=".14">$2.0M</text><text x="489.2" y="544.6" font-size="8.2" fill="#333333" text-anchor="middle" letter-spacing=".12" stroke="#333333" stroke-width=".14">$3.0M</text><text x="391.1" y="558.2" font-size="8" fill="#8c8c8c" textLength="76.2" lengthAdjust="spacingAndGlyphs">Revenu per Employee</text></svg></section>
<section class="card" style="left:533.5px;top:318px;width:255.75px;height:247px"><svg width="255.75" height="247" viewBox="533.5 318 255.75 247"><text x="539.6" y="336.9" font-size="13" fill="#161616" font-weight="bold" textLength="86.7" lengthAdjust="spacingAndGlyphs" stroke="#161616" stroke-width=".3">Compa Ratio</text><text x="539.6" y="359.8" font-size="13" fill="#161616" font-weight="bold" textLength="29.5" lengthAdjust="spacingAndGlyphs" stroke="#161616" stroke-width=".3">0.71</text><text x="577.9" y="360.2" font-size="9.2" fill="#5e5e5e" font-weight="bold" textLength="53.2" lengthAdjust="spacingAndGlyphs" stroke="#5e5e5e" stroke-width=".18">% of Target</text><text x="636.2" y="360.2" font-size="9.2" fill="#161616" font-weight="bold" textLength="28.6" lengthAdjust="spacingAndGlyphs">89.3%</text><line x1="571.50" y1="488.40" x2="774.00" y2="488.40" stroke="#f4f4f4" stroke-width="1" /><line x1="571.50" y1="470.80" x2="774.00" y2="470.80" stroke="#f4f4f4" stroke-width="1" /><line x1="571.50" y1="453.20" x2="774.00" y2="453.20" stroke="#f4f4f4" stroke-width="1" /><line x1="571.50" y1="435.60" x2="774.00" y2="435.60" stroke="#f4f4f4" stroke-width="1" /><line x1="571.50" y1="418.00" x2="774.00" y2="418.00" stroke="#f4f4f4" stroke-width="1" /><line x1="571.50" y1="400.40" x2="774.00" y2="400.40" stroke="#f4f4f4" stroke-width="1" /><line x1="571.50" y1="382.80" x2="774.00" y2="382.80" stroke="#f4f4f4" stroke-width="1" /><line x1="605.25" y1="382.80" x2="605.25" y2="506.00" stroke="#f4f4f4" stroke-width="1" /><line x1="639.00" y1="382.80" x2="639.00" y2="506.00" stroke="#f4f4f4" stroke-width="1" /><line x1="672.75" y1="382.80" x2="672.75" y2="506.00" stroke="#f4f4f4" stroke-width="1" /><line x1="706.50" y1="382.80" x2="706.50" y2="506.00" stroke="#f4f4f4" stroke-width="1" /><line x1="740.25" y1="382.80" x2="740.25" y2="506.00" stroke="#f4f4f4" stroke-width="1" /><line x1="774.00" y1="382.80" x2="774.00" y2="506.00" stroke="#f4f4f4" stroke-width="1" /><text x="564.8" y="508.9" font-size="8.2" fill="#333333" text-anchor="end" letter-spacing=".12" stroke="#333333" stroke-width=".14">0.0</text><text x="564.8" y="491.3" font-size="8.2" fill="#333333" text-anchor="end" letter-spacing=".12" stroke="#333333" stroke-width=".14">0.2</text><text x="564.8" y="473.7" font-size="8.2" fill="#333333" text-anchor="end" letter-spacing=".12" stroke="#333333" stroke-width=".14">0.4</text><text x="564.8" y="456.1" font-size="8.2" fill="#333333" text-anchor="end" letter-spacing=".12" stroke="#333333" stroke-width=".14">0.6</text><text x="564.8" y="438.5" font-size="8.2" fill="#333333" text-anchor="end" letter-spacing=".12" stroke="#333333" stroke-width=".14">0.8</text><text x="564.8" y="420.9" font-size="8.2" fill="#333333" text-anchor="end" letter-spacing=".12" stroke="#333333" stroke-width=".14">1.0</text><text x="564.8" y="403.3" font-size="8.2" fill="#333333" text-anchor="end" letter-spacing=".12" stroke="#333333" stroke-width=".14">1.2</text><text x="564.8" y="385.7" font-size="8.2" fill="#333333" text-anchor="end" letter-spacing=".12" stroke="#333333" stroke-width=".14">1.4</text><text x="571.5" y="520.0" font-size="8.2" fill="#333333" text-anchor="middle" letter-spacing=".12" stroke="#333333" stroke-width=".14">0</text><text x="605.2" y="520.0" font-size="8.2" fill="#333333" text-anchor="middle" letter-spacing=".12" stroke="#333333" stroke-width=".14">1</text><text x="639.0" y="520.0" font-size="8.2" fill="#333333" text-anchor="middle" letter-spacing=".12" stroke="#333333" stroke-width=".14">2</text><text x="672.8" y="520.0" font-size="8.2" fill="#333333" text-anchor="middle" letter-spacing=".12" stroke="#333333" stroke-width=".14">3</text><text x="706.5" y="520.0" font-size="8.2" fill="#333333" text-anchor="middle" letter-spacing=".12" stroke="#333333" stroke-width=".14">4</text><text x="740.2" y="520.0" font-size="8.2" fill="#333333" text-anchor="middle" letter-spacing=".12" stroke="#333333" stroke-width=".14">5</text><text x="774.0" y="520.0" font-size="8.2" fill="#333333" text-anchor="middle" letter-spacing=".12" stroke="#333333" stroke-width=".14">6</text><line x1="571.50" y1="382.80" x2="571.50" y2="506.00" stroke="#bdbdbd" stroke-width="1" /><line x1="571.50" y1="506.50" x2="774.00" y2="506.50" stroke="#a0a0a0" stroke-width="1" /><circle cx="605.2" cy="444.4" r="5.4" fill="#e68414" fill-opacity="0.38"/><circle cx="605.2" cy="462.0" r="5.4" fill="#e68414" fill-opacity="0.38"/><circle cx="605.2" cy="453.2" r="5.4" fill="#e68414" fill-opacity="0.95"/><circle cx="639.0" cy="400.4" r="5.4" fill="#e68414" fill-opacity="0.38"/><circle cx="639.0" cy="426.8" r="5.4" fill="#e68414" fill-opacity="0.38"/><circle cx="639.0" cy="457.6" r="5.4" fill="#e68414" fill-opacity="0.42"/><circle cx="639.0" cy="462.0" r="5.4" fill="#e68414" fill-opacity="0.8"/><circle cx="639.0" cy="440.0" r="5.4" fill="#e68414" fill-opacity="0.55"/><circle cx="639.0" cy="444.4" r="5.4" fill="#e68414" fill-opacity="0.7"/><circle cx="639.0" cy="435.6" r="5.4" fill="#e68414" fill-opacity="0.92"/><circle cx="672.8" cy="453.2" r="5.4" fill="#e68414" fill-opacity="0.38"/><circle cx="672.8" cy="435.6" r="5.4" fill="#e68414" fill-opacity="0.8"/><circle cx="706.5" cy="457.6" r="5.4" fill="#e68414" fill-opacity="0.42"/><circle cx="706.5" cy="453.2" r="5.4" fill="#3f7d92" fill-opacity="0.55"/><circle cx="706.5" cy="431.2" r="5.4" fill="#3f7d92" fill-opacity="0.55"/><circle cx="706.5" cy="435.6" r="5.4" fill="#e68414" fill-opacity="0.78"/><circle cx="706.5" cy="418.0" r="5.4" fill="#235c60" fill-opacity="0.5"/><circle cx="706.5" cy="418.0" r="5.4" fill="#e68414" fill-opacity="0.6"/><circle cx="740.2" cy="462.0" r="5.4" fill="#e68414" fill-opacity="0.38"/><circle cx="740.2" cy="479.6" r="5.4" fill="#e68414" fill-opacity="0.38"/><circle cx="740.2" cy="488.4" r="5.4" fill="#235c60" fill-opacity="0.42"/><circle cx="740.2" cy="426.8" r="5.4" fill="#235c60" fill-opacity="0.42"/><circle cx="740.2" cy="418.0" r="5.4" fill="#235c60" fill-opacity="0.8"/><text x="672.8" y="533.4" font-size="8" fill="#8c8c8c" text-anchor="middle" textLength="70.7" lengthAdjust="spacingAndGlyphs">Performance Rating</text><text x="547.6" y="444.6" font-size="8" fill="#8c8c8c" text-anchor="middle" textLength="44.8" lengthAdjust="spacingAndGlyphs" transform="rotate(-90 547.6 444.6)">Compa Ratio</text><text x="598.7" y="555.7" font-size="8" fill="#8c8c8c" textLength="22.6" lengthAdjust="spacingAndGlyphs">Status</text><rect x="633.40" y="549.50" width="6.60" height="6.60" fill="#235c60" /><text x="644.8" y="555.7" font-size="8.2" fill="#333333" textLength="23.9" lengthAdjust="spacingAndGlyphs" stroke="#333333" stroke-width=".14">At Risk</text><rect x="677.90" y="549.50" width="6.60" height="6.60" fill="#e68414" /><text x="688.9" y="555.7" font-size="8.2" fill="#333333" textLength="34.4" lengthAdjust="spacingAndGlyphs" stroke="#333333" stroke-width=".14">Employed</text></svg></section>
<section class="card" style="left:796.25px;top:318px;width:255.75px;height:247px"><svg width="255.75" height="247" viewBox="796.25 318 255.75 247"><text x="803.5" y="336.9" font-size="13" fill="#161616" font-weight="bold" textLength="36.6" lengthAdjust="spacingAndGlyphs" stroke="#161616" stroke-width=".3">Hires</text><text x="803.8" y="359.8" font-size="13" fill="#161616" font-weight="bold" textLength="24.5" lengthAdjust="spacingAndGlyphs" stroke="#161616" stroke-width=".3">487</text><text x="837.4" y="360.2" font-size="9.2" fill="#5e5e5e" font-weight="bold" textLength="52.9" lengthAdjust="spacingAndGlyphs" stroke="#5e5e5e" stroke-width=".18">% of Target</text><text x="895.5" y="360.2" font-size="9.2" fill="#161616" font-weight="bold" textLength="28.8" lengthAdjust="spacingAndGlyphs">91.9%</text><line x1="824.00" y1="493.08" x2="1045.30" y2="493.08" stroke="#f3f3f3" stroke-width="1" /><line x1="824.00" y1="465.66" x2="1045.30" y2="465.66" stroke="#f3f3f3" stroke-width="1" /><line x1="824.00" y1="438.24" x2="1045.30" y2="438.24" stroke="#f3f3f3" stroke-width="1" /><line x1="824.00" y1="410.82" x2="1045.30" y2="410.82" stroke="#f3f3f3" stroke-width="1" /><line x1="824.00" y1="383.40" x2="1045.30" y2="383.40" stroke="#f3f3f3" stroke-width="1" /><text x="817.5" y="523.1" font-size="8.2" fill="#333333" text-anchor="end" letter-spacing=".12" stroke="#333333" stroke-width=".14">0</text><text x="817.5" y="495.7" font-size="8.2" fill="#333333" text-anchor="end" letter-spacing=".12" stroke="#333333" stroke-width=".14">20</text><text x="817.5" y="468.3" font-size="8.2" fill="#333333" text-anchor="end" letter-spacing=".12" stroke="#333333" stroke-width=".14">40</text><text x="817.5" y="440.9" font-size="8.2" fill="#333333" text-anchor="end" letter-spacing=".12" stroke="#333333" stroke-width=".14">60</text><text x="817.5" y="413.4" font-size="8.2" fill="#333333" text-anchor="end" letter-spacing=".12" stroke="#333333" stroke-width=".14">80</text><text x="817.5" y="386.0" font-size="8.2" fill="#333333" text-anchor="end" letter-spacing=".12" stroke="#333333" stroke-width=".14">100</text><rect x="831.20" y="439.05" width="16.80" height="82.05" fill="#5b2c70" stroke="#4b235c" stroke-width=".8"/><text x="839.6" y="534.9" font-size="8.2" fill="#333333" text-anchor="middle" letter-spacing=".12" stroke="#333333" stroke-width=".14">Amy</text><text x="839.6" y="544.1" font-size="8.2" fill="#333333" text-anchor="middle" letter-spacing=".12" stroke="#333333" stroke-width=".14">Wong</text><rect x="862.78" y="425.20" width="16.80" height="95.90" fill="#5b2c70" stroke="#4b235c" stroke-width=".8"/><text x="871.2" y="534.9" font-size="8.2" fill="#333333" text-anchor="middle" letter-spacing=".12" stroke="#333333" stroke-width=".14">Carrie</text><text x="871.2" y="544.1" font-size="8.2" fill="#333333" text-anchor="middle" letter-spacing=".12" stroke="#333333" stroke-width=".14">Ring</text><rect x="894.36" y="445.77" width="16.80" height="75.33" fill="#5b2c70" stroke="#4b235c" stroke-width=".8"/><text x="902.8" y="534.9" font-size="8.2" fill="#333333" text-anchor="middle" letter-spacing=".12" stroke="#333333" stroke-width=".14">David</text><text x="902.8" y="544.1" font-size="8.2" fill="#333333" text-anchor="middle" letter-spacing=".12" stroke="#333333" stroke-width=".14">Jain</text><rect x="925.94" y="411.49" width="16.80" height="109.61" fill="#5b2c70" stroke="#4b235c" stroke-width=".8"/><text x="934.3" y="534.9" font-size="8.2" fill="#333333" text-anchor="middle" letter-spacing=".12" stroke="#333333" stroke-width=".14">Doug</text><text x="934.3" y="544.1" font-size="8.2" fill="#333333" text-anchor="middle" letter-spacing=".12" stroke="#333333" stroke-width=".14">Lock</text><rect x="957.52" y="418.49" width="16.80" height="102.61" fill="#5b2c70" stroke="#4b235c" stroke-width=".8"/><text x="965.9" y="534.9" font-size="8.2" fill="#333333" text-anchor="middle" letter-spacing=".12" stroke="#333333" stroke-width=".14">John</text><text x="965.9" y="544.1" font-size="8.2" fill="#333333" text-anchor="middle" letter-spacing=".12" stroke="#333333" stroke-width=".14">Smith</text><rect x="989.10" y="445.77" width="16.80" height="75.33" fill="#5b2c70" stroke="#4b235c" stroke-width=".8"/><text x="997.5" y="534.9" font-size="8.2" fill="#333333" text-anchor="middle" letter-spacing=".12" stroke="#333333" stroke-width=".14">Steve</text><text x="997.5" y="544.1" font-size="8.2" fill="#333333" text-anchor="middle" letter-spacing=".12" stroke="#333333" stroke-width=".14">Mack</text><rect x="1020.68" y="395.04" width="16.80" height="126.06" fill="#5b2c70" stroke="#4b235c" stroke-width=".8"/><text x="1029.1" y="534.9" font-size="8.2" fill="#333333" text-anchor="middle" letter-spacing=".12" stroke="#333333" stroke-width=".14">Tim</text><text x="1029.1" y="544.1" font-size="8.2" fill="#333333" text-anchor="middle" letter-spacing=".12" stroke="#333333" stroke-width=".14">Hardy</text><line x1="824.00" y1="521.50" x2="1045.30" y2="521.50" stroke="#949494" stroke-width="1" /><text x="934.1" y="557.4" font-size="8" fill="#8c8c8c" text-anchor="middle" textLength="31.0" lengthAdjust="spacingAndGlyphs">Manager</text></svg></section>
<svg class="grip" viewBox="0 317 8 11"><path d="M1.3 317.4V327.5M5.4 317.4V327.5" stroke="#7d7d7d" stroke-width="1.1"/></svg>
<footer class="foot"><svg width="1056" height="22" viewBox="0 572 1056 22"><text x="7.6" y="587.9" font-size="8.2" fill="#161616" font-weight="bold" textLength="82.4" lengthAdjust="spacingAndGlyphs">Finance and HR KPIs</text><circle cx="125.2" cy="584" r="4.2" fill="none" stroke="#2c2c2c" stroke-width=".9"/><path d="M123 584H127.4M125.2 581.8V586.2" stroke="#2c2c2c" stroke-width="1"/><rect x="6" y="593" width="88" height="1" fill="#ededed"/><rect x="949.8" y="580.6" width="8.6" height="8.4" rx="1" fill="none" stroke="#cfcfcf" stroke-width="1.1"/><circle cx="954.1" cy="584.8" r="1.6" fill="none" stroke="#dedede" stroke-width=".8"/><path d="M963.8 583.6H969.2L966.5 587.2Z" fill="#b9b9b9"/><path d="M978 580.8H985.2V585.6L983.2 587.4V589.6H980V587.4L978 585.6Z" fill="none" stroke="#8a9b3c" stroke-width="1.05" stroke-linejoin="round"/><path d="M980.3 581V583.2M982.9 581V583.2" stroke="#8a9b3c" stroke-width=".8"/><path d="M1000.8 581L996 585.7H999.3L998.4 588.9L1003.7 583.9H1000.2Z" fill="none" stroke="#8a9b3c" stroke-width="1" stroke-linejoin="round"/><line x1="1013.60" y1="577.50" x2="1013.60" y2="590.50" stroke="#e4e4e4" stroke-width="1" /><rect x="1021.8" y="580.2" width="9.6" height="9.8" rx=".8" fill="none" stroke="#1c1c1c" stroke-width="1.3"/><rect x="1021.8" y="580.2" width="3.6" height="9.8" fill="#1c1c1c"/><rect x="1039.4" y="580.2" width="9.6" height="9.8" rx=".8" fill="none" stroke="#1c1c1c" stroke-width="1.3"/><rect x="1043.4" y="582" width="1.6" height="6.2" fill="#1c1c1c"/></svg></footer>
</body></html>
